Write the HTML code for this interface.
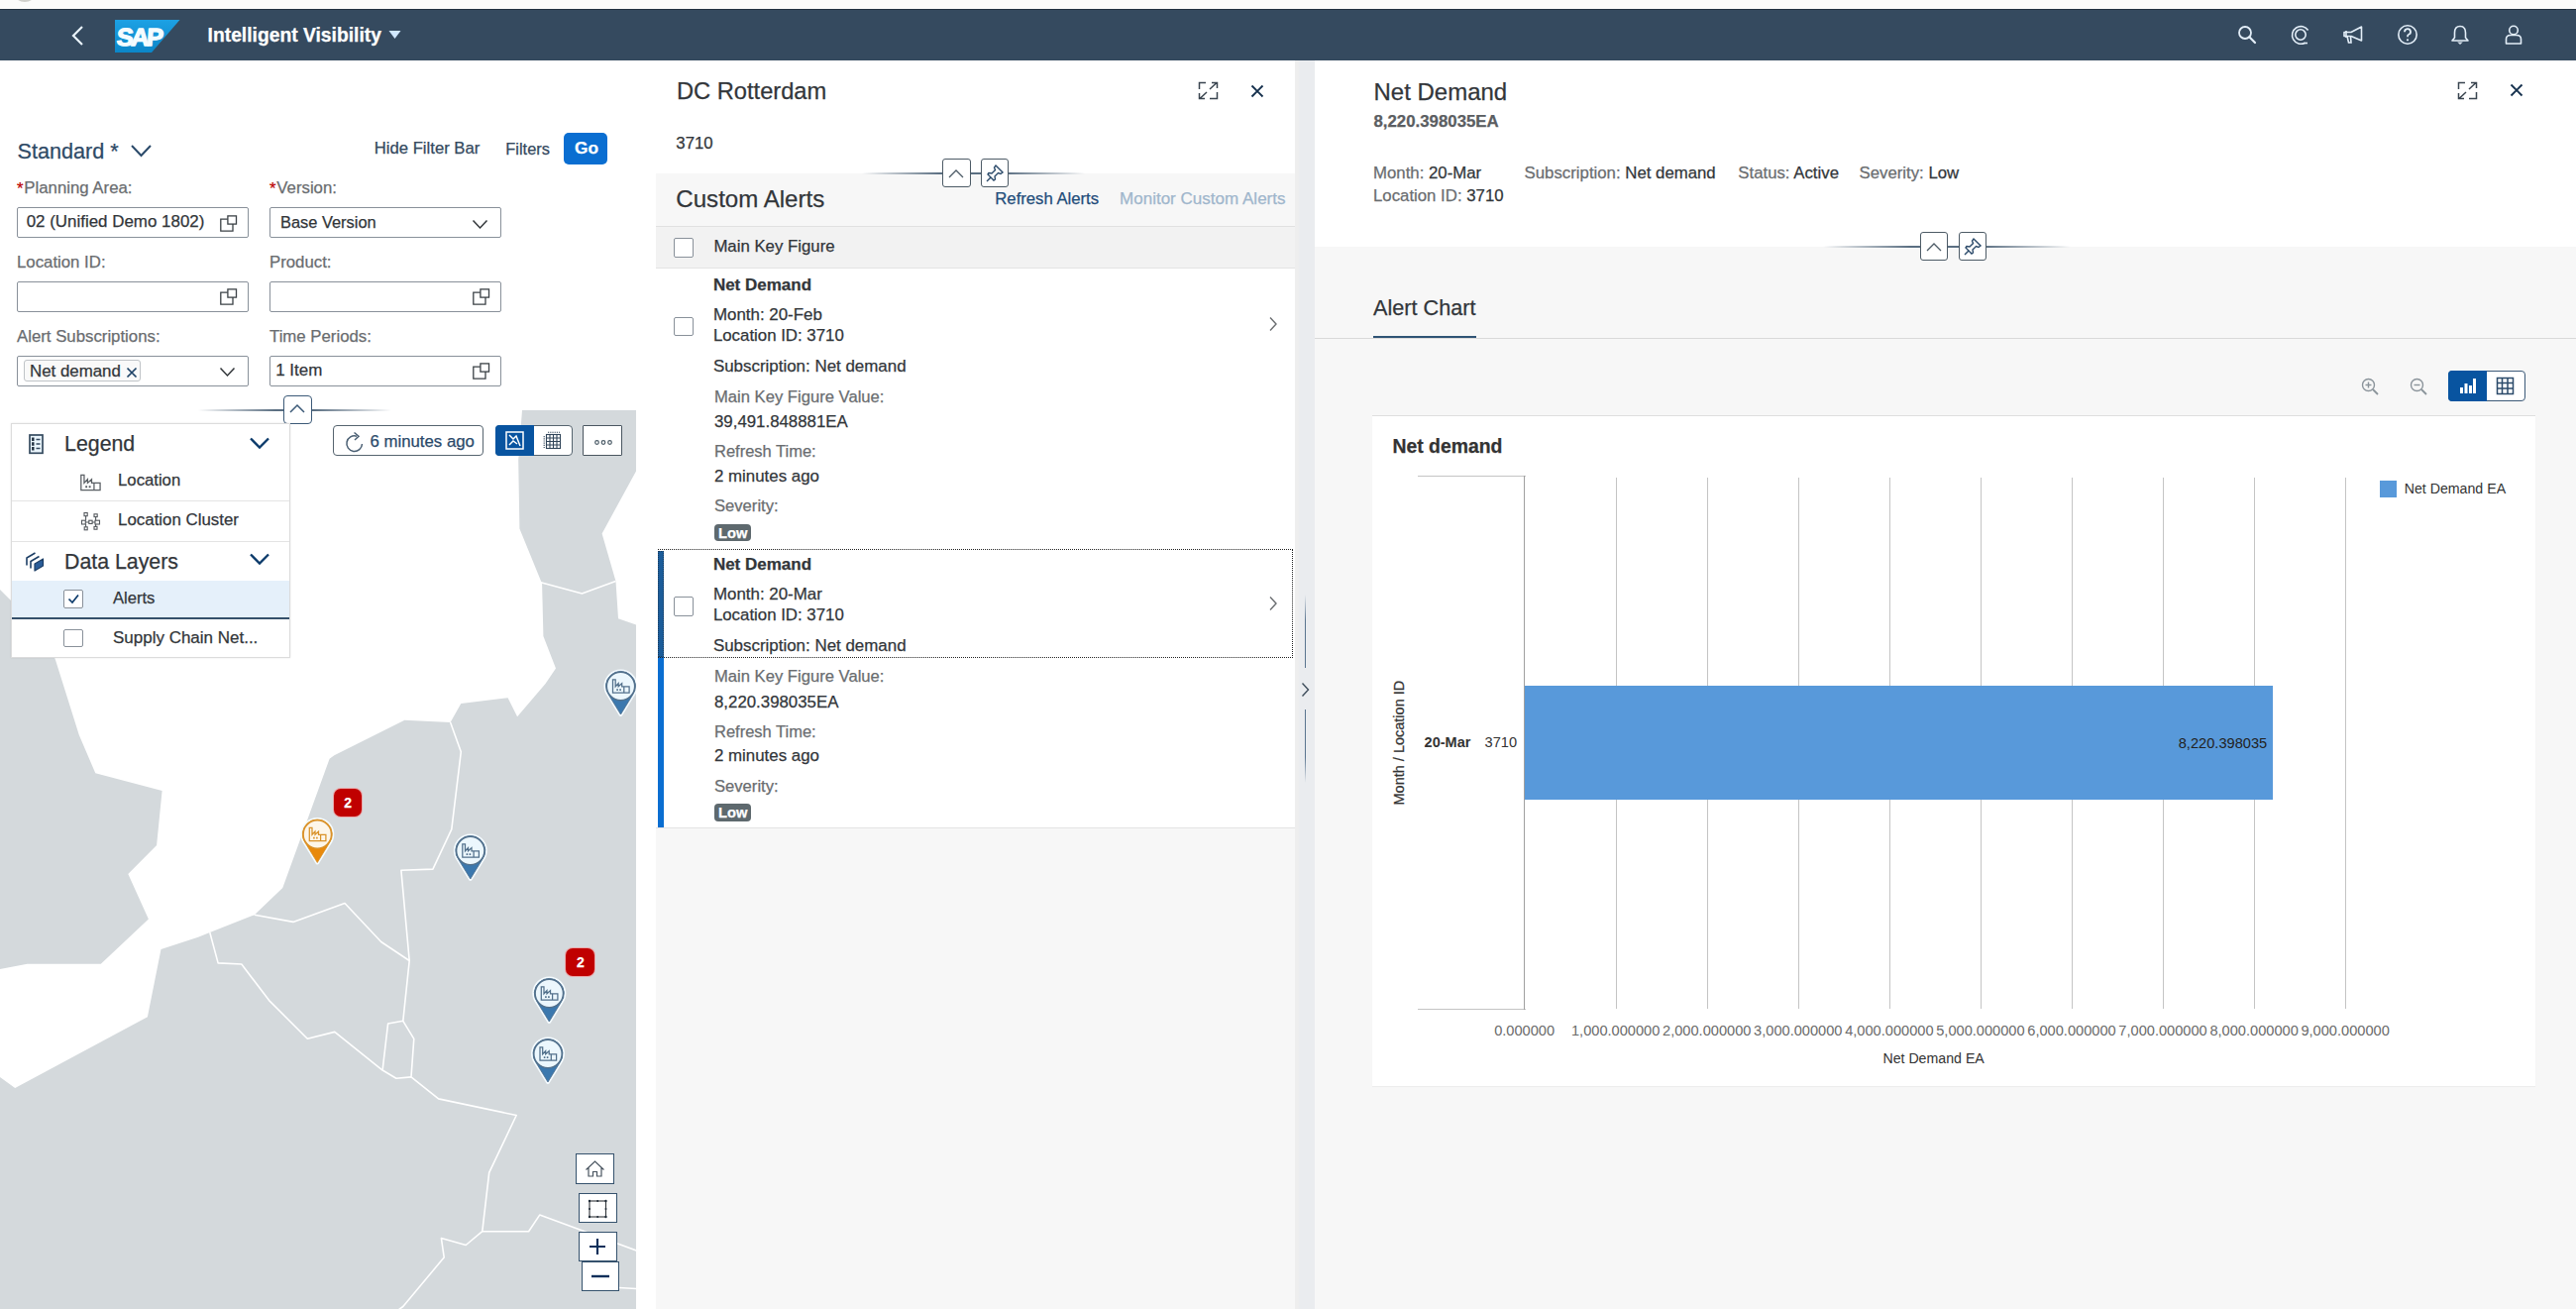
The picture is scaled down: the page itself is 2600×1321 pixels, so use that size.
<!DOCTYPE html><html><head><meta charset="utf-8"><style>
html,body{margin:0;padding:0;}
body{width:2600px;height:1321px;position:relative;overflow:hidden;background:#fff;font-family:"Liberation Sans",sans-serif;}
.t{position:absolute;white-space:nowrap;-webkit-text-stroke:0.25px currentColor;}
.r{position:absolute;box-sizing:border-box;}
</style></head><body>
<div class="r" style="left:0.00px;top:0.00px;width:2600.00px;height:9.00px;background:#fbfbfa;"></div>
<div class="r" style="left:13px;top:-20px;width:24px;height:22px;border:2px solid #cfcfca;border-radius:50%;"></div>
<div class="r" style="left:0.00px;top:9.00px;width:2600.00px;height:52.00px;background:#354a5f;"></div>
<div class="r" style="left:0.00px;top:8.50px;width:2600.00px;height:1.50px;background:#22313f;"></div>
<svg class="r" style="left:68.00px;top:24.00px;" width="20" height="24" viewBox="0 0 20 24"><path d="M15 3 L6 12 L15 21" fill="none" stroke="#eaf3fb" stroke-width="2.2"/></svg>
<svg class="r" style="left:115.50px;top:20.00px;" width="66" height="34" viewBox="0 0 66 34"><defs><linearGradient id="sg" x1="0" y1="0" x2="0" y2="1"><stop offset="0" stop-color="#1da1e4"/><stop offset="1" stop-color="#0b86c8"/></linearGradient></defs><polygon points="0,0 65.5,0 37,33 0,33" fill="url(#sg)"/><text x="3.2" y="27" font-family="Liberation Sans" font-weight="700" font-size="25.5" fill="#f4fcff" stroke="#f4fcff" stroke-width="1.3" stroke-linejoin="round" letter-spacing="-2.6" transform="scale(1,0.97) skewX(-4)">SAP</text></svg>
<div class="t" style="left:209.60px;top:25.96px;font-size:19.3px;line-height:19.3px;color:#ffffff;font-weight:700;">Intelligent Visibility</div>
<svg class="r" style="left:392.00px;top:30.00px;" width="13" height="10" viewBox="0 0 13 10"><polygon points="0.5,1 12.5,1 6.5,9" fill="#d1e8ff"/></svg>
<svg class="r" style="left:2257.00px;top:24.00px;" width="22" height="22" viewBox="0 0 22 22"><circle cx="9" cy="9" r="6" fill="none" stroke="#e3eef8" stroke-width="1.8"/><path d="M13.3 13.3 L19 19" stroke="#e3eef8" stroke-width="2.2" stroke-linecap="round"/></svg>
<svg class="r" style="left:2311.00px;top:24.00px;" width="22" height="22" viewBox="0 0 22 22"><circle cx="11" cy="11" r="5.2" fill="none" stroke="#e3eef8" stroke-width="1.6"/><path d="M15.5 19.2 A8.8 8.8 0 1 1 18.6 6.5" fill="none" stroke="#e3eef8" stroke-width="1.6"/><path d="M14.5 19.5 L18 19.5" stroke="#e3eef8" stroke-width="1.6"/></svg>
<svg class="r" style="left:2364.00px;top:24.00px;" width="22" height="22" viewBox="0 0 22 22"><path d="M2 8.5 L9 8.5 L19.5 3 L19.5 17 L9 12.5 L2 12.5 Z" fill="none" stroke="#e3eef8" stroke-width="1.6" stroke-linejoin="round"/><path d="M5 12.5 L6.5 19 L9 19 L8.5 12.5" fill="none" stroke="#e3eef8" stroke-width="1.6"/><path d="M4 7 L4 14" stroke="#e3eef8" stroke-width="1.6"/></svg>
<svg class="r" style="left:2419.00px;top:24.00px;" width="22" height="22" viewBox="0 0 22 22"><circle cx="11" cy="11" r="9.2" fill="none" stroke="#e3eef8" stroke-width="1.6"/><path d="M8 8.2 A3 3 0 1 1 11.8 11 C11 11.4 11 12 11 13.2" fill="none" stroke="#e3eef8" stroke-width="1.8"/><circle cx="11" cy="16.3" r="1.1" fill="#e3eef8"/></svg>
<svg class="r" style="left:2472.00px;top:24.00px;" width="22" height="22" viewBox="0 0 22 22"><path d="M11 2.5 C6.5 2.5 5.5 6 5.5 9 L5.5 14 L3 17 L19 17 L16.5 14 L16.5 9 C16.5 6 15.5 2.5 11 2.5 Z" fill="none" stroke="#e3eef8" stroke-width="1.6" stroke-linejoin="round"/><path d="M9 18.5 L11 20.5 L13 18.5" fill="#e3eef8" stroke="#e3eef8" stroke-width="1"/></svg>
<svg class="r" style="left:2526.00px;top:24.00px;" width="22" height="22" viewBox="0 0 22 22"><circle cx="11" cy="6.5" r="4.3" fill="none" stroke="#e3eef8" stroke-width="1.6"/><path d="M3.5 20 L3.5 15.5 C3.5 13 5.5 11.5 8 11.5 L14 11.5 C16.5 11.5 18.5 13 18.5 15.5 L18.5 20 Z" fill="none" stroke="#e3eef8" stroke-width="1.6" stroke-linejoin="round"/></svg>
<div class="r" style="left:0.00px;top:61.00px;width:642.00px;height:353.00px;background:#ffffff;"></div>
<div class="t" style="left:17.50px;top:141.77px;font-size:21.65px;line-height:21.65px;color:#2e4a66;">Standard *</div>
<svg class="r" style="left:131.00px;top:144.00px;" width="24" height="16" viewBox="0 0 24 16"><path d="M2 3 L11.5 13 L21 3" fill="none" stroke="#2b4a6a" stroke-width="2"/></svg>
<div class="t" style="left:377.70px;top:142.06px;font-size:16.7px;line-height:16.7px;color:#34495e;">Hide Filter Bar</div>
<div class="t" style="left:510.30px;top:142.32px;font-size:16.4px;line-height:16.4px;color:#34495e;">Filters</div>
<div class="r" style="left:569.00px;top:134.00px;width:44.00px;height:32.00px;background:#0a6ed1;border-radius:5px;"></div>
<div class="t" style="left:580.00px;top:140.66px;font-size:17.3px;line-height:17.3px;color:#ffffff;font-weight:700;">Go</div>
<div class="t" style="left:17.00px;top:182.78px;font-size:16.8px;line-height:16.8px;color:#bb0000;">*</div>
<div class="t" style="left:24.30px;top:181.78px;font-size:16.8px;line-height:16.8px;color:#6a6d70;">Planning Area:</div>
<div class="t" style="left:272.00px;top:182.78px;font-size:16.8px;line-height:16.8px;color:#bb0000;">*</div>
<div class="t" style="left:279.30px;top:181.78px;font-size:16.8px;line-height:16.8px;color:#6a6d70;">Version:</div>
<div class="t" style="left:17.00px;top:257.28px;font-size:16.8px;line-height:16.8px;color:#6a6d70;">Location ID:</div>
<div class="t" style="left:272.00px;top:257.28px;font-size:16.8px;line-height:16.8px;color:#6a6d70;">Product:</div>
<div class="t" style="left:17.00px;top:331.58px;font-size:16.8px;line-height:16.8px;color:#6a6d70;">Alert Subscriptions:</div>
<div class="t" style="left:272.00px;top:331.58px;font-size:16.8px;line-height:16.8px;color:#6a6d70;">Time Periods:</div>
<div class="r" style="left:17.00px;top:209.00px;width:234.00px;height:30.50px;background:#fff;border:1px solid #89919a;border-radius:2px;"></div>
<div class="t" style="left:26.70px;top:216.47px;font-size:16.93px;line-height:16.93px;color:#32363a;">02 (Unified Demo 1802)</div>
<svg class="r" style="left:221.00px;top:216.50px;" width="19" height="18" viewBox="0 0 19 18"><g fill="none" stroke="#3b4146" stroke-width="1.3" stroke-linejoin="miter"><path d="M8.8 4.2 L1.8 4.2 L1.8 16.1 L14 16.1 L14 9"/><rect x="8.9" y="0.9" width="8.6" height="8.2"/></g></svg>
<div class="r" style="left:272.00px;top:209.00px;width:234.00px;height:30.50px;background:#fff;border:1px solid #89919a;border-radius:2px;"></div>
<div class="t" style="left:283.00px;top:215.60px;font-size:16.42px;line-height:16.42px;color:#32363a;">Base Version</div>
<svg class="r" style="left:476.00px;top:220.50px;" width="17" height="11" viewBox="0 0 17 11"><path d="M1.5 1.5 L8.5 9 L15.5 1.5" fill="none" stroke="#32363a" stroke-width="1.5"/></svg>
<div class="r" style="left:17.00px;top:284.00px;width:234.00px;height:31.00px;background:#fff;border:1px solid #89919a;border-radius:2px;"></div>
<svg class="r" style="left:221.00px;top:291.00px;" width="19" height="18" viewBox="0 0 19 18"><g fill="none" stroke="#3b4146" stroke-width="1.3" stroke-linejoin="miter"><path d="M8.8 4.2 L1.8 4.2 L1.8 16.1 L14 16.1 L14 9"/><rect x="8.9" y="0.9" width="8.6" height="8.2"/></g></svg>
<div class="r" style="left:272.00px;top:284.00px;width:234.00px;height:31.00px;background:#fff;border:1px solid #89919a;border-radius:2px;"></div>
<svg class="r" style="left:476.00px;top:291.00px;" width="19" height="18" viewBox="0 0 19 18"><g fill="none" stroke="#3b4146" stroke-width="1.3" stroke-linejoin="miter"><path d="M8.8 4.2 L1.8 4.2 L1.8 16.1 L14 16.1 L14 9"/><rect x="8.9" y="0.9" width="8.6" height="8.2"/></g></svg>
<div class="r" style="left:17.00px;top:359.00px;width:234.00px;height:30.50px;background:#fff;border:1px solid #89919a;border-radius:2px;"></div>
<div class="r" style="left:23.50px;top:362.80px;width:118.70px;height:22.40px;background:#f9f9f9;border:1px solid #c0c4c8;border-radius:3px;"></div>
<div class="t" style="left:30.00px;top:367.03px;font-size:16.86px;line-height:16.86px;color:#32363a;">Net demand</div>
<svg class="r" style="left:126.50px;top:369.50px;" width="12" height="12" viewBox="0 0 12 12"><path d="M1.5 1.5 L10.5 10.5 M10.5 1.5 L1.5 10.5" stroke="#1d4266" stroke-width="1.7"/></svg>
<svg class="r" style="left:221.00px;top:370.00px;" width="17" height="11" viewBox="0 0 17 11"><path d="M1.5 1.5 L8.5 9 L15.5 1.5" fill="none" stroke="#32363a" stroke-width="1.5"/></svg>
<div class="r" style="left:272.00px;top:359.00px;width:234.00px;height:30.50px;background:#fff;border:1px solid #89919a;border-radius:2px;"></div>
<div class="t" style="left:278.20px;top:366.16px;font-size:16.94px;line-height:16.94px;color:#32363a;">1 Item</div>
<svg class="r" style="left:476.00px;top:366.00px;" width="19" height="18" viewBox="0 0 19 18"><g fill="none" stroke="#3b4146" stroke-width="1.3" stroke-linejoin="miter"><path d="M8.8 4.2 L1.8 4.2 L1.8 16.1 L14 16.1 L14 9"/><rect x="8.9" y="0.9" width="8.6" height="8.2"/></g></svg>
<svg class="r" style="left:0;top:0" width="642" height="1321" viewBox="0 0 642 1321"><rect x="0" y="414" width="642" height="907" fill="#ffffff"/><polygon points="0,595 45,640 56,666 79.8,741.8 96.3,780.3 163.6,798.1 158.1,853.1 129.3,882 149.9,927.4 101.8,972.8 27.5,972.8 0,978" fill="#d4d9dc"/><polygon points="527,414 642,414 642,475.5 607.6,538.5 621.5,586.4 624,624.2 642,630.5 642,1321 0,1321 0,1087 15.2,1098 148.9,1026.2 162.5,958 200,945.8 211.8,941 256.8,923.3 285.3,896 332.6,765.8 337.4,762.2 408.4,726.7 454.6,729.1 465.3,710.1 512.6,704.2 522.1,723.2 550.5,690 561,674.6 548.4,641.9 547.1,589 524.4,533.5 523.2,464.2" fill="#d4d9dc"/><polyline points="545.8,587.7 587.4,599 621.5,586.4" fill="none" stroke="#ffffff" stroke-width="1.6" stroke-linejoin="round"/><polyline points="454.6,729.1 465.3,758.7 455.8,836.8 436.9,877.1 404.9,878.3 413.2,969.5 406.8,1030.3" fill="none" stroke="#ffffff" stroke-width="1.6" stroke-linejoin="round"/><polyline points="256.8,923.3 295.9,930.4 348,911.5 384.7,950.5 413.2,969.5" fill="none" stroke="#ffffff" stroke-width="1.6" stroke-linejoin="round"/><polyline points="211.8,941 220.1,971.9 243.8,973 271.6,1009.6 310.3,1048.3 337.8,1041.4 386.1,1080 399.9,1088.2 415,1086.9" fill="none" stroke="#ffffff" stroke-width="1.6" stroke-linejoin="round"/><polyline points="386.1,1080 391.6,1033 406.8,1030.3 417.8,1048.3 415,1086.9 442.6,1108.9 521.2,1125.5 493.7,1183.4 486.8,1242.7 533.6,1242.7 544.7,1226.1 642.6,1262" fill="none" stroke="#ffffff" stroke-width="1.6" stroke-linejoin="round"/><polyline points="486.8,1242.7 470.2,1256.5 445.4,1249.6 448.2,1268.9 406.8,1318.5 402,1322" fill="none" stroke="#ffffff" stroke-width="1.6" stroke-linejoin="round"/><polyline points="620.5,1299.2 642.6,1300.6" fill="none" stroke="#ffffff" stroke-width="1.6" stroke-linejoin="round"/></svg>
<div class="r" style="left:642.00px;top:61.00px;width:20.00px;height:1260.00px;background:#ffffff;"></div>
<svg class="r" style="left:0;top:414px" width="642" height="907" viewBox="0 414 642 907"><g transform="translate(320.3,842)"><path d="M0 28.5 L-11.8 9.2 A15 15 0 1 1 11.8 9.2 Z" fill="#ffffff" stroke="#f4fbff" stroke-width="4" stroke-linejoin="round"/><path d="M0 28.5 L-11.8 9.2 A15 15 0 1 1 11.8 9.2 Z" fill="#e8890c" stroke="#d9922a" stroke-width="0.8"/><circle cx="0" cy="0" r="14.2" fill="#fdf6ea" stroke="#d9922a" stroke-width="1.5"/><g transform="translate(0,0.3)"><path d="M-8 6.3 L-8 -7 L-5.3 -7 L-5.3 0 L-2.3 -3.2 L-2.3 0 L1.2 -3.2 L1.2 0 L8.6 0 L8.6 6.3 Z M3.3 0.6 L3.3 6.3" fill="none" stroke="#d9922a" stroke-width="1.25" stroke-linejoin="miter"/><path d="M-4.2 3.3 L-2.6 3.3 M-1.2 3.3 L0.4 3.3" stroke="#d9922a" stroke-width="1.6"/></g></g><g transform="translate(474.8,858.5)"><path d="M0 28.5 L-11.8 9.2 A15 15 0 1 1 11.8 9.2 Z" fill="#ffffff" stroke="#f4fbff" stroke-width="4" stroke-linejoin="round"/><path d="M0 28.5 L-11.8 9.2 A15 15 0 1 1 11.8 9.2 Z" fill="#3b78ae" stroke="#52708b" stroke-width="0.8"/><circle cx="0" cy="0" r="14.2" fill="#ecf7fd" stroke="#52708b" stroke-width="1.5"/><g transform="translate(0,0.3)"><path d="M-8 6.3 L-8 -7 L-5.3 -7 L-5.3 0 L-2.3 -3.2 L-2.3 0 L1.2 -3.2 L1.2 0 L8.6 0 L8.6 6.3 Z M3.3 0.6 L3.3 6.3" fill="none" stroke="#52708b" stroke-width="1.25" stroke-linejoin="miter"/><path d="M-4.2 3.3 L-2.6 3.3 M-1.2 3.3 L0.4 3.3" stroke="#52708b" stroke-width="1.6"/></g></g><g transform="translate(626.5,692.5)"><path d="M0 28.5 L-11.8 9.2 A15 15 0 1 1 11.8 9.2 Z" fill="#ffffff" stroke="#f4fbff" stroke-width="4" stroke-linejoin="round"/><path d="M0 28.5 L-11.8 9.2 A15 15 0 1 1 11.8 9.2 Z" fill="#3b78ae" stroke="#52708b" stroke-width="0.8"/><circle cx="0" cy="0" r="14.2" fill="#ecf7fd" stroke="#52708b" stroke-width="1.5"/><g transform="translate(0,0.3)"><path d="M-8 6.3 L-8 -7 L-5.3 -7 L-5.3 0 L-2.3 -3.2 L-2.3 0 L1.2 -3.2 L1.2 0 L8.6 0 L8.6 6.3 Z M3.3 0.6 L3.3 6.3" fill="none" stroke="#52708b" stroke-width="1.25" stroke-linejoin="miter"/><path d="M-4.2 3.3 L-2.6 3.3 M-1.2 3.3 L0.4 3.3" stroke="#52708b" stroke-width="1.6"/></g></g><g transform="translate(554.3,1002.5)"><path d="M0 28.5 L-11.8 9.2 A15 15 0 1 1 11.8 9.2 Z" fill="#ffffff" stroke="#f4fbff" stroke-width="4" stroke-linejoin="round"/><path d="M0 28.5 L-11.8 9.2 A15 15 0 1 1 11.8 9.2 Z" fill="#3b78ae" stroke="#52708b" stroke-width="0.8"/><circle cx="0" cy="0" r="14.2" fill="#ecf7fd" stroke="#52708b" stroke-width="1.5"/><g transform="translate(0,0.3)"><path d="M-8 6.3 L-8 -7 L-5.3 -7 L-5.3 0 L-2.3 -3.2 L-2.3 0 L1.2 -3.2 L1.2 0 L8.6 0 L8.6 6.3 Z M3.3 0.6 L3.3 6.3" fill="none" stroke="#52708b" stroke-width="1.25" stroke-linejoin="miter"/><path d="M-4.2 3.3 L-2.6 3.3 M-1.2 3.3 L0.4 3.3" stroke="#52708b" stroke-width="1.6"/></g></g><g transform="translate(553,1063.5)"><path d="M0 28.5 L-11.8 9.2 A15 15 0 1 1 11.8 9.2 Z" fill="#ffffff" stroke="#f4fbff" stroke-width="4" stroke-linejoin="round"/><path d="M0 28.5 L-11.8 9.2 A15 15 0 1 1 11.8 9.2 Z" fill="#3b78ae" stroke="#52708b" stroke-width="0.8"/><circle cx="0" cy="0" r="14.2" fill="#ecf7fd" stroke="#52708b" stroke-width="1.5"/><g transform="translate(0,0.3)"><path d="M-8 6.3 L-8 -7 L-5.3 -7 L-5.3 0 L-2.3 -3.2 L-2.3 0 L1.2 -3.2 L1.2 0 L8.6 0 L8.6 6.3 Z M3.3 0.6 L3.3 6.3" fill="none" stroke="#52708b" stroke-width="1.25" stroke-linejoin="miter"/><path d="M-4.2 3.3 L-2.6 3.3 M-1.2 3.3 L0.4 3.3" stroke="#52708b" stroke-width="1.6"/></g></g></svg>
<div class="r" style="left:337.10px;top:795.50px;width:27.90px;height:28.20px;background:#c00000;border-radius:7px;box-shadow:0 0 0 1px rgba(255,120,120,.5);"></div>
<div class="t" style="left:201.05px;width:300px;text-align:center;top:803.15px;font-size:14px;line-height:14px;color:#ffffff;font-weight:700;">2</div>
<div class="r" style="left:571.40px;top:956.50px;width:28.90px;height:28.50px;background:#c00000;border-radius:7px;box-shadow:0 0 0 1px rgba(255,120,120,.5);"></div>
<div class="t" style="left:435.85px;width:300px;text-align:center;top:964.15px;font-size:14px;line-height:14px;color:#ffffff;font-weight:700;">2</div>
<div class="r" style="left:200px;top:413px;width:195px;height:1.5px;background:linear-gradient(90deg,rgba(53,74,95,0),#5b6f82 40%,#5b6f82 60%,rgba(53,74,95,0));"></div>
<div class="r" style="left:285.60px;top:399.00px;width:29.40px;height:29.00px;background:#fff;border:1px solid #3c5a78;border-radius:4px;"></div>
<svg class="r" style="left:290.00px;top:405.00px;" width="20" height="14" viewBox="0 0 20 14"><path d="M3 11 L10 4 L17 11" fill="none" stroke="#3c5a78" stroke-width="1.5"/></svg>
<div class="r" style="left:10.60px;top:427.30px;width:282.10px;height:236.70px;background:#ffffff;border:1px solid #dcdcdc;box-shadow:0 0 2px rgba(0,0,0,.1);"></div>
<svg class="r" style="left:28.50px;top:437.50px;" width="16" height="21" viewBox="0 0 16 21"><rect x="1" y="1" width="13" height="18.3" fill="#eaf5fc" stroke="#354a5f" stroke-width="1.7"/><path d="M4.3 3.5 L4.3 17" stroke="#1d2d3d" stroke-width="2.4" stroke-dasharray="3.5 1.3"/><path d="M7.5 5.5 L11.5 5.5 M7.5 10 L11.5 10 M7.5 14.5 L11.5 14.5" stroke="#354a5f" stroke-width="1.3"/></svg>
<div class="t" style="left:65.10px;top:437.97px;font-size:21.3px;line-height:21.3px;color:#32363a;">Legend</div>
<svg class="r" style="left:251.00px;top:440.00px;" width="22" height="14" viewBox="0 0 22 14"><path d="M2 2.5 L11 11.5 L20 2.5" fill="none" stroke="#0b3a6a" stroke-width="2.3"/></svg>
<svg class="r" style="left:0;top:0" width="120" height="520" viewBox="0 0 120 520"><g transform="translate(91.1,487.4) scale(1.16)"><path d="M-8 6.3 L-8 -7 L-5.3 -7 L-5.3 0 L-2.3 -3.2 L-2.3 0 L1.2 -3.2 L1.2 0 L8.6 0 L8.6 6.3 Z M3.3 0.6 L3.3 6.3" fill="none" stroke="#5a5f64" stroke-width="1.1" stroke-linejoin="miter"/><path d="M-4.2 3.3 L-2.6 3.3 M-1.2 3.3 L0.4 3.3" stroke="#5a5f64" stroke-width="1.6"/></g></svg>
<div class="t" style="left:119.10px;top:477.26px;font-size:16.7px;line-height:16.7px;color:#32363a;">Location</div>
<div class="r" style="left:11.60px;top:504.80px;width:280.10px;height:1.20px;background:#e4e4e4;"></div>
<svg class="r" style="left:0;top:0" width="120" height="560" viewBox="0 0 120 560"><g fill="none" stroke="#555a5f" stroke-width="1.1"><rect x="85" y="517.5" width="3.2" height="3.2"/><rect x="95" y="518.8" width="3.2" height="2.8"/><rect x="82.5" y="525.2" width="3.8" height="3.8"/><rect x="89.8" y="525.2" width="3.3" height="3.3"/><rect x="96" y="525.2" width="4.5" height="3.8"/><rect x="85.2" y="531.8" width="3" height="3"/><rect x="95" y="531.4" width="3" height="2.8"/><path d="M86.6 520.7 L86.6 525.2 M96.6 521.6 L96.6 525.2 M86.3 527 L89.8 527 M93.1 527 L96 527 M86.6 529 L86.6 531.8 M96.6 529 L96.6 531.4"/></g></svg>
<div class="t" style="left:119.10px;top:517.02px;font-size:16.87px;line-height:16.87px;color:#32363a;">Location Cluster</div>
<div class="r" style="left:11.60px;top:546.00px;width:280.10px;height:1.20px;background:#e4e4e4;"></div>
<svg class="r" style="left:25.50px;top:556.50px;" width="19" height="20" viewBox="0 0 19 20"><g stroke="#1d3f66" stroke-width="1.6" fill="none" stroke-linejoin="round"><path d="M1 13.5 L1 6 L9.5 1"/><path d="M5 16.5 L5 9.5 L13.5 4.5"/></g><path d="M9 12 L17.5 7 L17.5 14 L9 19 Z" fill="#2b5d99" stroke="#1d3f66" stroke-width="1.2" stroke-linejoin="round"/></svg>
<div class="t" style="left:65.10px;top:556.67px;font-size:21.3px;line-height:21.3px;color:#32363a;">Data Layers</div>
<svg class="r" style="left:251.00px;top:557.00px;" width="22" height="14" viewBox="0 0 22 14"><path d="M2 2.5 L11 11.5 L20 2.5" fill="none" stroke="#0b3a6a" stroke-width="2.3"/></svg>
<div class="r" style="left:11.60px;top:585.60px;width:280.10px;height:37.40px;background:#e5f0fa;"></div>
<div class="r" style="left:11.60px;top:623.20px;width:280.10px;height:1.60px;background:#35506a;"></div>
<div class="r" style="left:64.30px;top:595.00px;width:20.20px;height:18.50px;background:#fff;border:1px solid #89919a;border-radius:2px;"></div>
<svg class="r" style="left:66.00px;top:597.00px;" width="17" height="15" viewBox="0 0 17 15"><path d="M3.5 7.5 L7 11 L13 3.5" fill="none" stroke="#0b3a6a" stroke-width="1.7"/></svg>
<div class="t" style="left:114.00px;top:595.95px;font-size:16.6px;line-height:16.6px;color:#32363a;">Alerts</div>
<div class="r" style="left:64.30px;top:634.80px;width:20.20px;height:18.20px;background:#fff;border:1px solid #89919a;border-radius:2px;"></div>
<div class="t" style="left:114.00px;top:635.02px;font-size:16.99px;line-height:16.99px;color:#32363a;">Supply Chain Net...</div>
<div class="r" style="left:336.00px;top:429.00px;width:152.30px;height:31.00px;background:#fff;border:1px solid #56646f;border-radius:4px;"></div>
<svg class="r" style="left:347.00px;top:435.00px;" width="22" height="22" viewBox="0 0 22 22"><path d="M18.5 13 A7.8 7.8 0 1 1 13 5.2" fill="none" stroke="#4a5f73" stroke-width="1.5"/><path d="M10.5 1.5 L15 5.3 L11 9" fill="none" stroke="#4a5f73" stroke-width="1.5"/></svg>
<div class="t" style="left:373.50px;top:437.78px;font-size:16.8px;line-height:16.8px;color:#2b4a6a;">6 minutes ago</div>
<div class="r" style="left:499.60px;top:429.00px;width:78.70px;height:31.00px;background:#fff;border:1px solid #56646f;border-radius:4px;"></div>
<div class="r" style="left:499.60px;top:429.00px;width:39.40px;height:31.00px;background:#0854a0;border-radius:4px 0 0 4px;"></div>
<svg class="r" style="left:509.00px;top:434.00px;" width="21" height="21" viewBox="0 0 21 21"><rect x="2" y="2" width="17" height="17" fill="none" stroke="#fff" stroke-width="1.5"/><path d="M5 5 L9 9 L12 6 L16 16 M5 15 L9 11 L13 14" fill="none" stroke="#fff" stroke-width="1.5"/></svg>
<svg class="r" style="left:547.00px;top:434.00px;" width="22" height="22" viewBox="0 0 22 22"><g fill="none" stroke="#32465a" stroke-width="1.1"><rect x="4.5" y="4.5" width="14" height="14"/><path d="M4.5 8 L18.5 8 M4.5 11.5 L18.5 11.5 M4.5 15 L18.5 15 M8 4.5 L8 18.5 M11.5 4.5 L11.5 18.5 M15 4.5 L15 18.5"/><path d="M6 2.2 L18 2.2 M2.2 6 L2.2 18" stroke-dasharray="1.2 1"/></g></svg>
<div class="r" style="left:588.00px;top:429.00px;width:39.80px;height:31.00px;background:#fff;border:1px solid #4a5660;border-radius:1px;"></div>
<svg class="r" style="left:597.00px;top:439.50px;" width="24" height="12" viewBox="0 0 24 12"><g fill="none" stroke="#4a5a66" stroke-width="1.2"><circle cx="5.5" cy="6.5" r="1.8"/><circle cx="12" cy="6.5" r="1.8"/><circle cx="18.5" cy="6.5" r="1.8"/></g></svg>
<div class="r" style="left:581.40px;top:1164.00px;width:39.10px;height:31.00px;background:#fff;border:1.4px solid #35526d;"></div>
<svg class="r" style="left:581.40px;top:1164.00px;" width="39" height="31" viewBox="0 0 39 31"><path d="M10.5 16.5 L19.5 8 L28.5 16.5 M13 14.5 L13 23 L17.5 23 L17.5 18.5 L21.5 18.5 L21.5 23 L26 23 L26 14.5" fill="none" stroke="#4a5560" stroke-width="1.2"/></svg>
<div class="r" style="left:584.10px;top:1204.00px;width:38.60px;height:30.40px;background:#fff;border:1.4px solid #35526d;"></div>
<svg class="r" style="left:584.10px;top:1204.00px;" width="38" height="30" viewBox="0 0 38 30"><rect x="11" y="8" width="16.5" height="16" fill="none" stroke="#32363a" stroke-width="1.1"/><g fill="#1f2a36"><circle cx="11" cy="8" r="1.2"/><circle cx="27.5" cy="8" r="1.2"/><circle cx="11" cy="24" r="1.2"/><circle cx="27.5" cy="24" r="1.2"/><circle cx="19.2" cy="8" r="1"/><circle cx="19.2" cy="24" r="1"/><circle cx="11" cy="16" r="1"/><circle cx="27.5" cy="16" r="1"/></g></svg>
<div class="r" style="left:584.10px;top:1242.70px;width:38.60px;height:30.30px;background:#fff;border:1.4px solid #35526d;"></div>
<svg class="r" style="left:584.10px;top:1242.70px;" width="38" height="30" viewBox="0 0 38 30"><path d="M19 7 L19 23 M11 15 L27 15" stroke="#0b2f5a" stroke-width="2.2"/></svg>
<div class="r" style="left:586.90px;top:1273.00px;width:37.80px;height:29.50px;background:#fff;border:1.4px solid #35526d;"></div>
<svg class="r" style="left:586.90px;top:1273.00px;" width="37" height="29" viewBox="0 0 37 29"><path d="M10 15 L28 15" stroke="#0b2f5a" stroke-width="2.4"/></svg>
<div class="r" style="left:662.00px;top:61.00px;width:645.00px;height:114.00px;background:#ffffff;"></div>
<div class="r" style="left:662.00px;top:175.00px;width:645.00px;height:1146.00px;background:#f7f7f7;"></div>
<div class="t" style="left:682.90px;top:80.64px;font-size:23.7px;line-height:23.7px;color:#32363a;">DC Rotterdam</div>
<svg class="r" style="left:1208.50px;top:82.00px;" width="21" height="19" viewBox="0 0 21 19"><g fill="none" stroke="#3a4550" stroke-width="1.5"><path d="M8 1.5 L1.5 1.5 L1.5 8 M12 17.5 L19.5 17.5 L19.5 11 M12 8 L19 1.5 M14 1.5 L19.5 1.5 L19.5 7 M9 11 L2 17.5 M1.5 12 L1.5 17.5 L7 17.5"/></g></svg>
<svg class="r" style="left:1261.50px;top:84.50px;" width="14" height="14" viewBox="0 0 14 14"><path d="M1.5 1.5 L12.5 12.5 M12.5 1.5 L1.5 12.5" stroke="#15304d" stroke-width="1.9"/></svg>
<div class="t" style="left:682.30px;top:136.78px;font-size:16.8px;line-height:16.8px;color:#32363a;">3710</div>
<div class="r" style="left:870px;top:174px;width:225px;height:1.5px;background:linear-gradient(90deg,rgba(53,74,95,0),#5b6f82 35%,#5b6f82 65%,rgba(53,74,95,0));"></div>
<div class="r" style="left:950.70px;top:159.70px;width:29.00px;height:28.90px;background:#fff;border:1px solid #4d5b66;border-radius:3px;"></div>
<svg class="r" style="left:955.20px;top:168.00px;" width="20" height="14" viewBox="0 0 20 14"><path d="M3 11 L10 4 L17 11" fill="none" stroke="#4d5b66" stroke-width="1.3"/></svg>
<div class="r" style="left:990.40px;top:159.70px;width:27.30px;height:28.90px;background:#fff;border:1px solid #4d5b66;border-radius:3px;"></div>
<svg class="r" style="left:994.00px;top:164.50px;" width="20" height="20" viewBox="0 0 20 20"><g fill="none" stroke="#2b4a6a" stroke-width="1.4"><path d="M11 2 L18 9 L16 10.5 L13.5 9.5 L10 13 L10.5 16 L9 17 L3 11 L4 9.5 L7 10 L10.5 6.5 L9.5 4 Z"/><path d="M6 14 L2 18"/></g></svg>
<div class="t" style="left:682.30px;top:188.80px;font-size:24.1px;line-height:24.1px;color:#32363a;">Custom Alerts</div>
<div class="t" style="left:1004.30px;top:192.65px;font-size:16.72px;line-height:16.72px;color:#1f4d7a;">Refresh Alerts</div>
<div class="t" style="left:1130.00px;top:192.38px;font-size:17.04px;line-height:17.04px;color:#9fb6cc;">Monitor Custom Alerts</div>
<div class="r" style="left:662.00px;top:227.50px;width:645.00px;height:1.00px;background:#e1e1e1;"></div>
<div class="r" style="left:662.00px;top:228.50px;width:645.00px;height:42.00px;background:#f2f2f2;"></div>
<div class="r" style="left:662.00px;top:270.00px;width:645.00px;height:1.00px;background:#e4e4e4;"></div>
<div class="r" style="left:680.00px;top:240.00px;width:20.00px;height:19.50px;background:#fff;border:1px solid #89919a;border-radius:2px;"></div>
<div class="t" style="left:720.40px;top:240.78px;font-size:16.8px;line-height:16.8px;color:#32363a;">Main Key Figure</div>
<div class="r" style="left:662.00px;top:271.00px;width:645.00px;height:284.00px;background:#fff;"></div>
<div class="t" style="left:719.90px;top:278.81px;font-size:17.0px;line-height:17.0px;color:#32363a;font-weight:700;">Net Demand</div>
<div class="t" style="left:719.90px;top:309.69px;font-size:16.91px;line-height:16.91px;color:#32363a;">Month: 20-Feb</div>
<div class="t" style="left:719.90px;top:330.74px;font-size:16.84px;line-height:16.84px;color:#32363a;">Location ID: 3710</div>
<div class="t" style="left:719.90px;top:361.67px;font-size:16.93px;line-height:16.93px;color:#32363a;">Subscription: Net demand</div>
<div class="t" style="left:721.00px;top:392.63px;font-size:16.62px;line-height:16.62px;color:#6a6d70;">Main Key Figure Value:</div>
<div class="t" style="left:721.00px;top:418.25px;font-size:16.83px;line-height:16.83px;color:#32363a;">39,491.848881EA</div>
<div class="t" style="left:721.00px;top:447.23px;font-size:16.5px;line-height:16.5px;color:#6a6d70;">Refresh Time:</div>
<div class="t" style="left:721.00px;top:472.63px;font-size:16.86px;line-height:16.86px;color:#32363a;">2 minutes ago</div>
<div class="t" style="left:721.00px;top:503.42px;font-size:16.63px;line-height:16.63px;color:#6a6d70;">Severity:</div>
<div class="r" style="left:721.00px;top:528.60px;width:37.40px;height:17.90px;background:#5e696e;border-radius:4px;"></div>
<div class="t" style="left:589.70px;width:300px;text-align:center;top:530.76px;font-size:14.7px;line-height:14.7px;color:#ffffff;font-weight:700;">Low</div>
<div class="r" style="left:680.00px;top:319.60px;width:20.00px;height:19.50px;background:#fff;border:1px solid #89919a;border-radius:2px;"></div>
<svg class="r" style="left:1280.00px;top:319.00px;" width="10" height="16" viewBox="0 0 10 16"><path d="M2 1.5 L8 8 L2 14.5" fill="none" stroke="#6a6d70" stroke-width="1.4"/></svg>
<div class="r" style="left:662.00px;top:555.00px;width:645.00px;height:280.50px;background:#fff;"></div>
<div class="r" style="left:662.00px;top:834.50px;width:645.00px;height:1.00px;background:#e4e4e4;"></div>
<div class="t" style="left:719.90px;top:561.31px;font-size:17.0px;line-height:17.0px;color:#32363a;font-weight:700;">Net Demand</div>
<div class="t" style="left:719.90px;top:592.19px;font-size:16.91px;line-height:16.91px;color:#32363a;">Month: 20-Mar</div>
<div class="t" style="left:719.90px;top:613.24px;font-size:16.84px;line-height:16.84px;color:#32363a;">Location ID: 3710</div>
<div class="t" style="left:719.90px;top:644.17px;font-size:16.93px;line-height:16.93px;color:#32363a;">Subscription: Net demand</div>
<div class="t" style="left:721.00px;top:675.13px;font-size:16.62px;line-height:16.62px;color:#6a6d70;">Main Key Figure Value:</div>
<div class="t" style="left:721.00px;top:700.75px;font-size:16.83px;line-height:16.83px;color:#32363a;">8,220.398035EA</div>
<div class="t" style="left:721.00px;top:729.73px;font-size:16.5px;line-height:16.5px;color:#6a6d70;">Refresh Time:</div>
<div class="t" style="left:721.00px;top:755.13px;font-size:16.86px;line-height:16.86px;color:#32363a;">2 minutes ago</div>
<div class="t" style="left:721.00px;top:785.92px;font-size:16.63px;line-height:16.63px;color:#6a6d70;">Severity:</div>
<div class="r" style="left:721.00px;top:811.10px;width:37.40px;height:17.90px;background:#5e696e;border-radius:4px;"></div>
<div class="t" style="left:589.70px;width:300px;text-align:center;top:813.26px;font-size:14.7px;line-height:14.7px;color:#ffffff;font-weight:700;">Low</div>
<div class="r" style="left:680.00px;top:602.10px;width:20.00px;height:19.50px;background:#fff;border:1px solid #89919a;border-radius:2px;"></div>
<svg class="r" style="left:1279.50px;top:601.00px;" width="10" height="16" viewBox="0 0 10 16"><path d="M2 1.5 L8 8 L2 14.5" fill="none" stroke="#6a6d70" stroke-width="1.4"/></svg>
<div class="r" style="left:664.20px;top:556.60px;width:5.80px;height:278.20px;background:#0a6ed1;"></div>
<div class="r" style="left:664px;top:554px;width:641px;height:110px;border:1px dotted #222;border-left:none;"></div>
<div class="r" style="left:664px;top:556px;width:6px;height:107px;border:1px dotted #1a3d5f;background:#1c5d9a;"></div>
<div class="r" style="left:1307.00px;top:61.00px;width:19.50px;height:1260.00px;background:linear-gradient(90deg,#eeeeee 0px,#eeeeee 3px,#eaecef 5px,#eaecef 19.5px);"></div>
<div class="r" style="left:1326.50px;top:249.00px;width:5.50px;height:1072.00px;background:linear-gradient(90deg,#f2f4f6,#f7f7f7);"></div>
<div class="r" style="left:1317.20px;top:600.00px;width:1.20px;height:74.00px;background:linear-gradient(180deg,rgba(90,117,144,0),#5a7590 35%,#5a7590);"></div>
<div class="r" style="left:1317.20px;top:716.00px;width:1.20px;height:74.00px;background:linear-gradient(180deg,#5a7590,#5a7590 65%,rgba(90,117,144,0));"></div>
<svg class="r" style="left:1310.00px;top:686.00px;" width="14" height="20" viewBox="0 0 14 20"><path d="M4.5 3.5 L10.5 10 L4.5 16.5" fill="none" stroke="#3f4e5c" stroke-width="1.4"/></svg>
<div class="r" style="left:1326.50px;top:61.00px;width:1273.50px;height:188.00px;background:#ffffff;"></div>
<div class="r" style="left:1326.50px;top:249.00px;width:1273.50px;height:1072.00px;background:#f7f7f7;"></div>
<div class="t" style="left:1386.50px;top:80.59px;font-size:23.99px;line-height:23.99px;color:#32363a;">Net Demand</div>
<div class="t" style="left:1386.50px;top:114.96px;font-size:16.82px;line-height:16.82px;color:#5b5e62;font-weight:700;">8,220.398035EA</div>
<div class="t" style="left:1386px;top:167.18px;font-size:16.8px;line-height:16.8px;color:#6a6d70;">Month: <span style="color:#32363a">20-Mar</span></div>
<div class="t" style="left:1386px;top:190.48px;font-size:16.8px;line-height:16.8px;color:#6a6d70;">Location ID: <span style="color:#32363a">3710</span></div>
<div class="t" style="left:1538.6px;top:167.18px;font-size:16.8px;line-height:16.8px;color:#6a6d70;">Subscription: <span style="color:#32363a">Net demand</span></div>
<div class="t" style="left:1754.3px;top:167.18px;font-size:16.8px;line-height:16.8px;color:#6a6d70;">Status: <span style="color:#32363a">Active</span></div>
<div class="t" style="left:1876.5px;top:167.18px;font-size:16.8px;line-height:16.8px;color:#6a6d70;">Severity: <span style="color:#32363a">Low</span></div>
<svg class="r" style="left:2480.00px;top:81.50px;" width="21" height="19" viewBox="0 0 21 19"><g fill="none" stroke="#3a4550" stroke-width="1.5"><path d="M8 1.5 L1.5 1.5 L1.5 8 M12 17.5 L19.5 17.5 L19.5 11 M12 8 L19 1.5 M14 1.5 L19.5 1.5 L19.5 7 M9 11 L2 17.5 M1.5 12 L1.5 17.5 L7 17.5"/></g></svg>
<svg class="r" style="left:2532.50px;top:84.00px;" width="14" height="14" viewBox="0 0 14 14"><path d="M1.5 1.5 L12.5 12.5 M12.5 1.5 L1.5 12.5" stroke="#15304d" stroke-width="1.9"/></svg>
<div class="r" style="left:1840px;top:248px;width:250px;height:1.5px;background:linear-gradient(90deg,rgba(53,74,95,0),#5b6f82 35%,#5b6f82 65%,rgba(53,74,95,0));"></div>
<div class="r" style="left:1938.30px;top:234.00px;width:28.20px;height:28.70px;background:#fff;border:1px solid #4d5b66;border-radius:3px;"></div>
<svg class="r" style="left:1942.40px;top:241.50px;" width="20" height="14" viewBox="0 0 20 14"><path d="M3 11 L10 4 L17 11" fill="none" stroke="#4d5b66" stroke-width="1.3"/></svg>
<div class="r" style="left:1977.00px;top:234.00px;width:28.40px;height:28.70px;background:#fff;border:1px solid #4d5b66;border-radius:3px;"></div>
<svg class="r" style="left:1981.20px;top:238.50px;" width="20" height="20" viewBox="0 0 20 20"><g fill="none" stroke="#2b4a6a" stroke-width="1.4"><path d="M11 2 L18 9 L16 10.5 L13.5 9.5 L10 13 L10.5 16 L9 17 L3 11 L4 9.5 L7 10 L10.5 6.5 L9.5 4 Z"/><path d="M6 14 L2 18"/></g></svg>
<div class="t" style="left:1386.00px;top:299.87px;font-size:21.65px;line-height:21.65px;color:#32363a;">Alert Chart</div>
<div class="r" style="left:1326.50px;top:341.00px;width:1273.50px;height:1.20px;background:#d9d9d9;"></div>
<div class="r" style="left:1385.50px;top:338.80px;width:104.80px;height:2.70px;background:#2f5475;"></div>
<svg class="r" style="left:2382.50px;top:381.00px;" width="19" height="19" viewBox="0 0 19 19"><circle cx="7.5" cy="7.5" r="6" fill="none" stroke="#8b949b" stroke-width="1.4"/><path d="M12 12 L17 17" stroke="#8b949b" stroke-width="1.8"/><path d="M4.5 7.5 L10.5 7.5" stroke="#8b949b" stroke-width="1.4"/><path d="M7.5 4.5 L7.5 10.5" stroke="#8b949b" stroke-width="1.4"/></svg>
<svg class="r" style="left:2431.50px;top:381.00px;" width="19" height="19" viewBox="0 0 19 19"><circle cx="7.5" cy="7.5" r="6" fill="none" stroke="#8b949b" stroke-width="1.4"/><path d="M12 12 L17 17" stroke="#8b949b" stroke-width="1.8"/><path d="M4.5 7.5 L10.5 7.5" stroke="#8b949b" stroke-width="1.4"/></svg>
<div class="r" style="left:2470.60px;top:374.20px;width:78.40px;height:30.80px;background:#fff;border:1px solid #3c5a78;border-radius:4px;"></div>
<div class="r" style="left:2470.60px;top:374.20px;width:39.40px;height:30.80px;background:#0854a0;border-radius:4px 0 0 4px;"></div>
<svg class="r" style="left:2480.00px;top:379.00px;" width="20" height="20" viewBox="0 0 20 20"><g fill="#fff"><rect x="3" y="12" width="3" height="6"/><rect x="7.5" y="8" width="3" height="10"/><rect x="12" y="10" width="3" height="8"/><rect x="16" y="3" width="3" height="15"/></g></svg>
<svg class="r" style="left:2518.00px;top:379.00px;" width="22" height="21" viewBox="0 0 22 21"><g fill="none" stroke="#2b4a6a" stroke-width="1.5"><rect x="2.5" y="2.5" width="16" height="16"/><path d="M2.5 7.5 L18.5 7.5 M2.5 13 L18.5 13 M7.5 2.5 L7.5 18.5 M13 2.5 L13 18.5"/></g></svg>
<div class="r" style="left:1385.00px;top:419.00px;width:1174.00px;height:1.00px;background:#dedede;"></div>
<div class="r" style="left:1385.00px;top:420.00px;width:1174.00px;height:675.50px;background:#ffffff;box-shadow:0 1px 1px rgba(0,0,0,.04);"></div>
<div class="t" style="left:1405.50px;top:441.29px;font-size:19.39px;line-height:19.39px;color:#333333;font-weight:700;">Net demand</div>
<div class="r" style="left:1430.60px;top:480.30px;width:109.00px;height:1.20px;background:#c4c4c4;"></div>
<div class="r" style="left:1430.90px;top:1017.60px;width:108.70px;height:1.20px;background:#c4c4c4;"></div>
<div class="r" style="left:1538.00px;top:480.30px;width:1.20px;height:538.50px;background:#a0a0a0;"></div>
<div class="r" style="left:1631.00px;top:482.00px;width:1.00px;height:536.00px;background:#c4c4c4;"></div>
<div class="r" style="left:1723.00px;top:482.00px;width:1.00px;height:536.00px;background:#c4c4c4;"></div>
<div class="r" style="left:1815.00px;top:482.00px;width:1.00px;height:536.00px;background:#c4c4c4;"></div>
<div class="r" style="left:1907.00px;top:482.00px;width:1.00px;height:536.00px;background:#c4c4c4;"></div>
<div class="r" style="left:1999.00px;top:482.00px;width:1.00px;height:536.00px;background:#c4c4c4;"></div>
<div class="r" style="left:2091.00px;top:482.00px;width:1.00px;height:536.00px;background:#c4c4c4;"></div>
<div class="r" style="left:2183.00px;top:482.00px;width:1.00px;height:536.00px;background:#c4c4c4;"></div>
<div class="r" style="left:2275.00px;top:482.00px;width:1.00px;height:536.00px;background:#c4c4c4;"></div>
<div class="r" style="left:2367.00px;top:482.00px;width:1.00px;height:536.00px;background:#c4c4c4;"></div>
<div class="r" style="left:1539.20px;top:692.00px;width:755.30px;height:115.30px;background:#5899da;"></div>
<div class="t" style="right:311.80px;top:742.61px;font-size:14.64px;line-height:14.64px;color:#222222;text-align:right;-webkit-text-stroke:0;">8,220.398035</div>
<div class="t" style="left:1437.60px;top:742.12px;font-size:14.51px;line-height:14.51px;color:#333333;font-weight:700;-webkit-text-stroke:0;">20-Mar</div>
<div class="t" style="left:1498.50px;top:742.03px;font-size:14.61px;line-height:14.61px;color:#333333;-webkit-text-stroke:0;">3710</div>
<div class="t" style="left:1352px;top:745.3px;width:120px;height:15px;font-size:14.5px;line-height:15px;text-align:center;color:#333;transform:rotate(-90deg);">Month / Location ID</div>
<div class="t" style="left:1388.60px;width:300px;text-align:center;top:1032.62px;font-size:14.62px;line-height:14.62px;color:#6a6a6a;-webkit-text-stroke:0;">0.000000</div>
<div class="t" style="left:1480.66px;width:300px;text-align:center;top:1032.62px;font-size:14.62px;line-height:14.62px;color:#6a6a6a;-webkit-text-stroke:0;">1,000.000000</div>
<div class="t" style="left:1572.72px;width:300px;text-align:center;top:1032.62px;font-size:14.62px;line-height:14.62px;color:#6a6a6a;-webkit-text-stroke:0;">2,000.000000</div>
<div class="t" style="left:1664.78px;width:300px;text-align:center;top:1032.62px;font-size:14.62px;line-height:14.62px;color:#6a6a6a;-webkit-text-stroke:0;">3,000.000000</div>
<div class="t" style="left:1756.84px;width:300px;text-align:center;top:1032.62px;font-size:14.62px;line-height:14.62px;color:#6a6a6a;-webkit-text-stroke:0;">4,000.000000</div>
<div class="t" style="left:1848.90px;width:300px;text-align:center;top:1032.62px;font-size:14.62px;line-height:14.62px;color:#6a6a6a;-webkit-text-stroke:0;">5,000.000000</div>
<div class="t" style="left:1940.96px;width:300px;text-align:center;top:1032.62px;font-size:14.62px;line-height:14.62px;color:#6a6a6a;-webkit-text-stroke:0;">6,000.000000</div>
<div class="t" style="left:2033.02px;width:300px;text-align:center;top:1032.62px;font-size:14.62px;line-height:14.62px;color:#6a6a6a;-webkit-text-stroke:0;">7,000.000000</div>
<div class="t" style="left:2125.08px;width:300px;text-align:center;top:1032.62px;font-size:14.62px;line-height:14.62px;color:#6a6a6a;-webkit-text-stroke:0;">8,000.000000</div>
<div class="t" style="left:2217.14px;width:300px;text-align:center;top:1032.62px;font-size:14.62px;line-height:14.62px;color:#6a6a6a;-webkit-text-stroke:0;">9,000.000000</div>
<div class="t" style="left:1801.60px;width:300px;text-align:center;top:1060.60px;font-size:14.18px;line-height:14.18px;color:#333333;-webkit-text-stroke:0;">Net Demand EA</div>
<div class="r" style="left:2402.00px;top:485.00px;width:16.50px;height:16.60px;background:#5899da;"></div>
<div class="t" style="left:2426.70px;top:486.00px;font-size:14.18px;line-height:14.18px;color:#333333;-webkit-text-stroke:0;">Net Demand EA</div>
</body></html>
